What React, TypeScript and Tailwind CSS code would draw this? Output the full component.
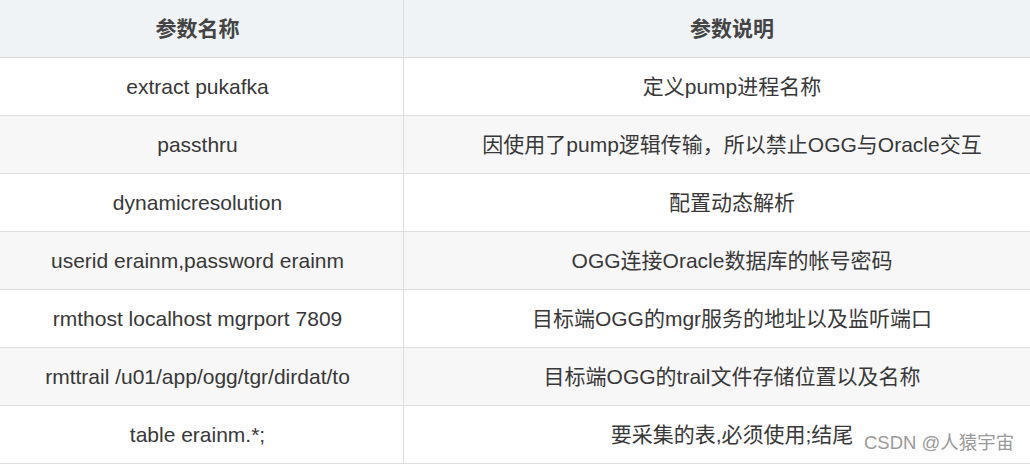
import React from "react";

type ParamRow = {
    name: string;
    desc: string;
};

const ROWS: ParamRow[] = [
    { name: "extract pukafka", desc: "定义pump进程名称" },
    { name: "passthru", desc: "因使用了pump逻辑传输，所以禁止OGG与Oracle交互" },
    { name: "dynamicresolution", desc: "配置动态解析" },
    { name: "userid erainm,password erainm", desc: "OGG连接Oracle数据库的帐号密码" },
    { name: "rmthost localhost mgrport 7809", desc: "目标端OGG的mgr服务的地址以及监听端口" },
    { name: "rmttrail /u01/app/ogg/tgr/dirdat/to", desc: "目标端OGG的trail文件存储位置以及名称" },
    { name: "table erainm.*;", desc: "要采集的表,必须使用;结尾" },
];

const FONT = "font-['Liberation_Sans','Noto_Sans_CJK_SC',sans-serif]";

export default function App() {
    return (
        <div className={`relative w-[1030px] h-[464px] overflow-hidden bg-white text-[#383838] ${FONT}`}>
            <div className="ml-[-8px] w-[1068px]">
                <div className="flex h-[58px] bg-[#eff3f5] border-b border-[#ddd]">
                    <div className="w-[412px] flex items-center justify-center text-[21px] font-bold text-[#444] border-r border-[#ddd]">
                        参数名称
                    </div>
                    <div className="flex-1 flex items-center justify-center text-[21px] font-bold text-[#444]">
                        参数说明
                    </div>
                </div>
                {ROWS.map((row, index) => (
                    <div
                        key={row.name}
                        className={`flex h-[58px] border-b border-[#ddd] ${index % 2 === 1 ? "bg-[#f7f7f7]" : "bg-white"}`}
                    >
                        <div className="w-[412px] flex items-center justify-center text-[21px] border-r border-[#ddd]">
                            {row.name}
                        </div>
                        <div className="flex-1 flex items-center justify-center text-[21px]">
                            {row.desc}
                        </div>
                    </div>
                ))}
            </div>
            <span className="absolute left-[864px] top-[429px] text-[18.5px] text-[#9a9a9a]">
                CSDN @人猿宇宙
            </span>
        </div>
    );
}
